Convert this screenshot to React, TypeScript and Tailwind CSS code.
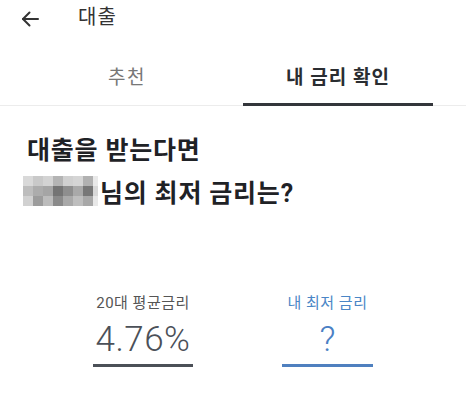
const PIXELS = [
  ['#d9d9d9', '#c9c9c9', '#d3d3d3', '#b4b4b4', '#d0d0d0', '#d5d5d5', '#b1b1b1', '#e9e9e9'],
  ['#bdbdbd', '#acacac', '#a5a5a5', '#747474', '#8e8e8e', '#a9a9a9', '#777777', '#d8d8d8'],
  ['#d1d1d1', '#9c9c9c', '#bcbcbc', '#8a8a8a', '#a9a9a9', '#bebebe', '#a8a8a8', '#e8e8e8'],
]

// pixelated (mosaic) user name
function BlurredName() {
  return (
    <span className="inline-block overflow-hidden align-[-4px] -ml-[4px] mr-[2px]">
      <span className="grid grid-cols-[repeat(7,10px)_5px] grid-rows-[repeat(3,10px)]">
        {PIXELS.flat().map((c, i) => (
          <span key={i} style={{ backgroundColor: c }} />
        ))}
      </span>
    </span>
  )
}

export default function App() {
  return (
    <div className="w-[466px] h-[407px] bg-white overflow-hidden font-['Roboto','Noto_Sans_CJK_KR',sans-serif]">
      {/* Header */}
      <div className="h-[34px] flex items-center">
        <svg width="20" height="20" viewBox="0 0 20 20" className="ml-[20px] mt-[3px]" fill="none" stroke="#333" strokeWidth="2" strokeLinecap="round" strokeLinejoin="round">
          <path d="M3 10h15" />
          <path d="M9.5 3.5L3 10l6.5 6.5" />
        </svg>
        <span className="ml-[38px] text-[20px] tracking-[1px] text-[#333] leading-[24px]">대출</span>
      </div>

      {/* Tabs */}
      <div className="flex px-[20px] border-b border-[#ececec]">
        <div className="w-[212px] flex justify-center">
          <span className="pt-[31px] pb-[12px] pl-[2px] border-b-[3px] border-transparent -mb-px text-[19px] tracking-[1.5px] leading-[26px] text-[#777]">
            추천
          </span>
        </div>
        <div className="w-[212px] flex justify-center px-[11px]">
          <span className="w-full text-center pt-[31px] pb-[12px] border-b-[3px] border-[#33363b] -mb-px text-[19px] tracking-[1px] leading-[26px] font-bold text-[#2a2d31]">
            내 금리 확인
          </span>
        </div>
      </div>

      {/* Heading */}
      <div className="pt-[23px] px-[27px] text-[25px] leading-[43px] font-bold text-[#1f2226] tracking-[0.8px]">
        <p>대출을 받는다면</p>
        <p>
          <BlurredName />
          님의 최저 금리는?
        </p>
      </div>

      {/* Rates */}
      <div className="mt-[78px] flex justify-center gap-[89px]">
        <div className="w-[100px] flex flex-col items-center">
          <span className="text-[15px] tracking-[0.5px] leading-[20px] text-[#555]">20대 평균금리</span>
          <span className="w-full mt-[7px] pb-[4px] text-center border-b-[3px] border-[#4b5057] text-[35px] tracking-[0.5px] leading-[40px] font-light text-[#4b5058]">
            4.76%
          </span>
        </div>
        <div className="w-[91px] flex flex-col items-center">
          <span className="text-[15px] tracking-[0.5px] leading-[20px] text-[#4a86c6]">내 최저 금리</span>
          <span className="w-full mt-[7px] pb-[4px] text-center border-b-[3px] border-[#4f80bf] text-[35px] leading-[40px] font-light text-[#4a80c4]">
            ?
          </span>
        </div>
      </div>
    </div>
  )
}
